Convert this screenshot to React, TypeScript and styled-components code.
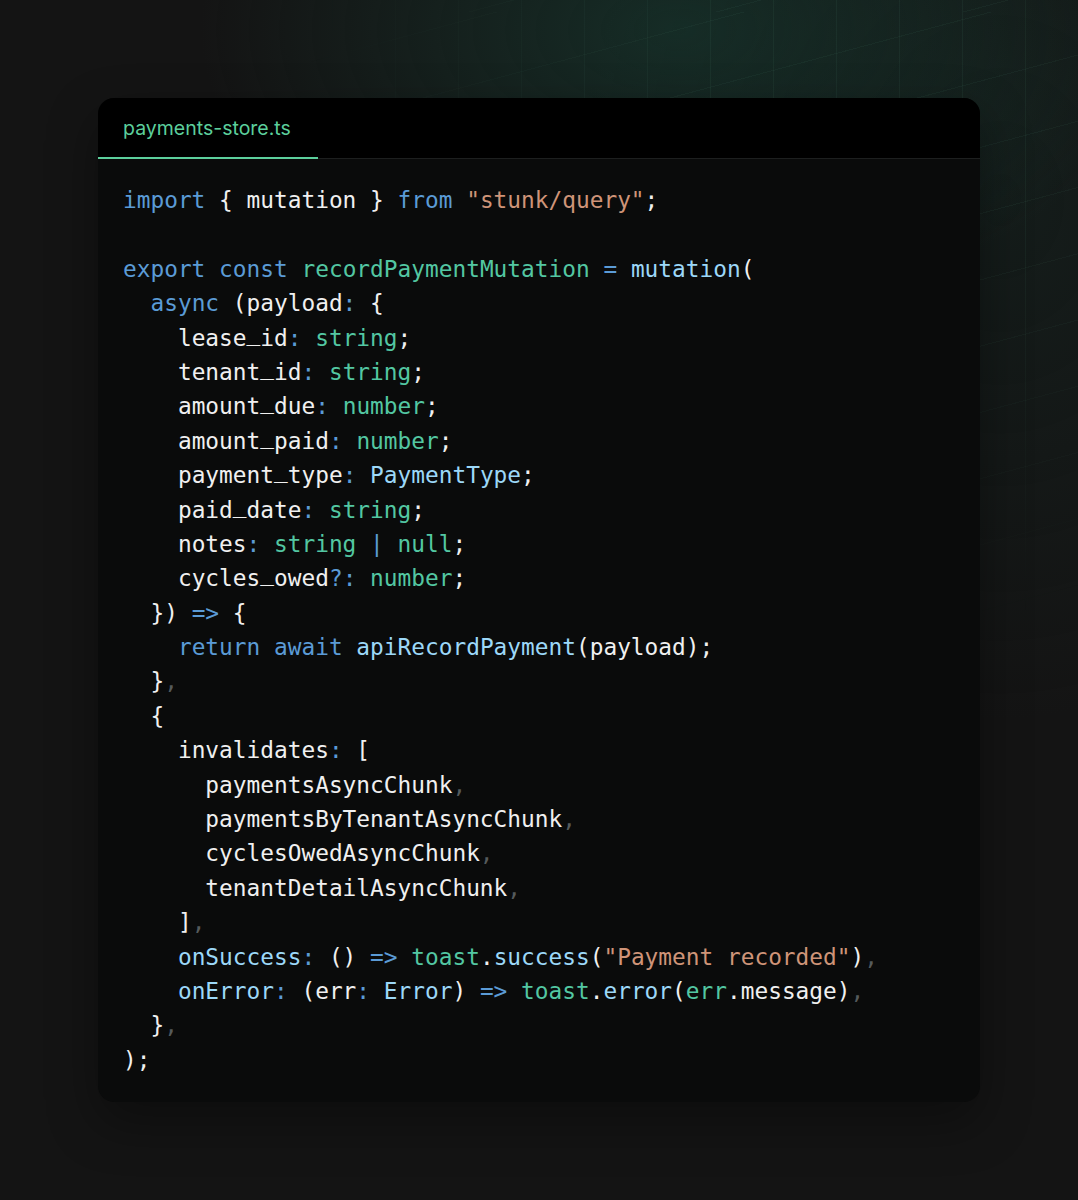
import React from "react";
import styled, { createGlobalStyle } from "styled-components";

const Global = createGlobalStyle`
  html, body { margin: 0; padding: 0; background: #141414; }
  #root { min-height: 1200px; }
`;

const Page = styled.div`
  position: relative;
  min-height: 1200px;
  box-sizing: border-box;
  padding: 98px 98px 98px 98px;
  overflow: hidden;
  background:
    radial-gradient(ellipse 480px 280px at 680px 30px, rgba(22, 52, 44, 0.75), rgba(20, 20, 20, 0) 100%),
    radial-gradient(ellipse 420px 520px at 1000px 200px, rgba(20, 36, 32, 0.5), rgba(20, 20, 20, 0) 100%),
    #141414;

  &::before {
    content: "";
    position: absolute;
    inset: 0;
    pointer-events: none;
    background-image:
      repeating-linear-gradient(90deg, rgba(70, 120, 100, 0.12) 0 1px, transparent 1px 63px),
      repeating-linear-gradient(165deg, rgba(70, 120, 100, 0.1) 0 1px, transparent 1px 64px);
    background-position: 17px 0, 0 12px;
    -webkit-mask-image: radial-gradient(ellipse 560px 520px at 860px 120px, #000 30%, transparent 100%);
    mask-image: radial-gradient(ellipse 560px 520px at 860px 120px, #000 30%, transparent 100%);
  }
`;

const Card = styled.section`
  position: relative;
  z-index: 1;
  width: 882px;
  border-radius: 16px;
  overflow: hidden;
  background: #0a0b0b;
  box-shadow: 0 20px 50px rgba(0, 0, 0, 0.35);
`;

const Header = styled.div`
  display: flex;
  height: 60px;
  background: #000;
  border-bottom: 1px solid #1d1f1f;
`;

const Tab = styled.div`
  width: 220px;
  box-sizing: border-box;
  padding-left: 25px;
  display: flex;
  align-items: center;
  font-family: Inter, "Noto Sans", sans-serif;
  font-size: 19.5px;
  color: #5ccf9c;
  border-bottom: 2px solid #5ccf9c;
  margin-bottom: -1px;
`;

const Code = styled.pre`
  margin: 0;
  padding: 24px 25px 25px 25px;
  font-family: "DejaVu Sans Mono", "Liberation Mono", monospace;
  font-size: 22.8px;
  line-height: 34.4px;
  color: #ececec;
  white-space: pre;
`;

const Line = styled.div`
  height: 34.4px;
`;

type Kind = "kw" | "fn" | "lb" | "str" | "p" | "dim" | "op";

const palette: Record<Kind, string> = {
  kw: "#5b9bd6",
  fn: "#53c7a2",
  lb: "#9cd8f8",
  str: "#cf9478",
  p: "#f0f0f0",
  dim: "#555a5c",
  op: "#5b9bd6",
};

const Tok = styled.span<{ $k: Kind }>`
  color: ${(p) => palette[p.$k]};
`;

const Under = styled.span`
  font-family: "Liberation Mono", monospace;
  font-weight: 700;
  line-height: 0;
  vertical-align: 2px;
  letter-spacing: 0.05px;
`;

type T = [Kind, string];
const I = (n: number): T => ["p", " ".repeat(n)];

const lines: T[][] = [
  [["kw", "import"], ["p", " { mutation } "], ["kw", "from"], ["p", " "], ["str", '"stunk/query"'], ["p", ";"]],
  [],
  [["kw", "export"], ["p", " "], ["kw", "const"], ["p", " "], ["fn", "recordPaymentMutation"], ["p", " "], ["op", "="], ["p", " "], ["lb", "mutation"], ["p", "("]],
  [I(2), ["kw", "async"], ["p", " (payload"], ["op", ":"], ["p", " {"]],
  [I(4), ["p", "lease_id"], ["op", ":"], ["p", " "], ["fn", "string"], ["p", ";"]],
  [I(4), ["p", "tenant_id"], ["op", ":"], ["p", " "], ["fn", "string"], ["p", ";"]],
  [I(4), ["p", "amount_due"], ["op", ":"], ["p", " "], ["fn", "number"], ["p", ";"]],
  [I(4), ["p", "amount_paid"], ["op", ":"], ["p", " "], ["fn", "number"], ["p", ";"]],
  [I(4), ["p", "payment_type"], ["op", ":"], ["p", " "], ["lb", "PaymentType"], ["p", ";"]],
  [I(4), ["p", "paid_date"], ["op", ":"], ["p", " "], ["fn", "string"], ["p", ";"]],
  [I(4), ["p", "notes"], ["op", ":"], ["p", " "], ["fn", "string"], ["p", " "], ["op", "|"], ["p", " "], ["fn", "null"], ["p", ";"]],
  [I(4), ["p", "cycles_owed"], ["op", "?:"], ["p", " "], ["fn", "number"], ["p", ";"]],
  [I(2), ["p", "})"], ["p", " "], ["op", "=>"], ["p", " {"]],
  [I(4), ["kw", "return"], ["p", " "], ["kw", "await"], ["p", " "], ["lb", "apiRecordPayment"], ["p", "(payload);"]],
  [I(2), ["p", "}"], ["dim", ","]],
  [I(2), ["p", "{"]],
  [I(4), ["p", "invalidates"], ["op", ":"], ["p", " ["]],
  [I(6), ["p", "paymentsAsyncChunk"], ["dim", ","]],
  [I(6), ["p", "paymentsByTenantAsyncChunk"], ["dim", ","]],
  [I(6), ["p", "cyclesOwedAsyncChunk"], ["dim", ","]],
  [I(6), ["p", "tenantDetailAsyncChunk"], ["dim", ","]],
  [I(4), ["p", "]"], ["dim", ","]],
  [I(4), ["lb", "onSuccess"], ["op", ":"], ["p", " () "], ["op", "=>"], ["p", " "], ["fn", "toast"], ["p", "."], ["lb", "success"], ["p", "("], ["str", '"Payment recorded"'], ["p", ")"], ["dim", ","]],
  [I(4), ["lb", "onError"], ["op", ":"], ["p", " (err"], ["op", ":"], ["p", " "], ["lb", "Error"], ["p", ") "], ["op", "=>"], ["p", " "], ["fn", "toast"], ["p", "."], ["lb", "error"], ["p", "("], ["fn", "err"], ["p", ".message)"], ["dim", ","]],
  [I(2), ["p", "}"], ["dim", ","]],
  [["p", ");"]],
];

function renderText(t: string) {
  if (!t.includes("_")) return t;
  const parts = t.split("_");
  return parts.map((part, i) => (
    <React.Fragment key={i}>
      {part}
      {i < parts.length - 1 && <Under>_</Under>}
    </React.Fragment>
  ));
}

export default function App() {
  return (
    <>
      <Global />
      <Page>
        <Card>
          <Header>
            <Tab>payments-store.ts</Tab>
          </Header>
          <Code>
            {lines.map((toks, i) => (
              <Line key={i}>
                {toks.map(([k, t], j) => (
                  <Tok key={j} $k={k}>
                    {renderText(t)}
                  </Tok>
                ))}
              </Line>
            ))}
          </Code>
        </Card>
      </Page>
    </>
  );
}
